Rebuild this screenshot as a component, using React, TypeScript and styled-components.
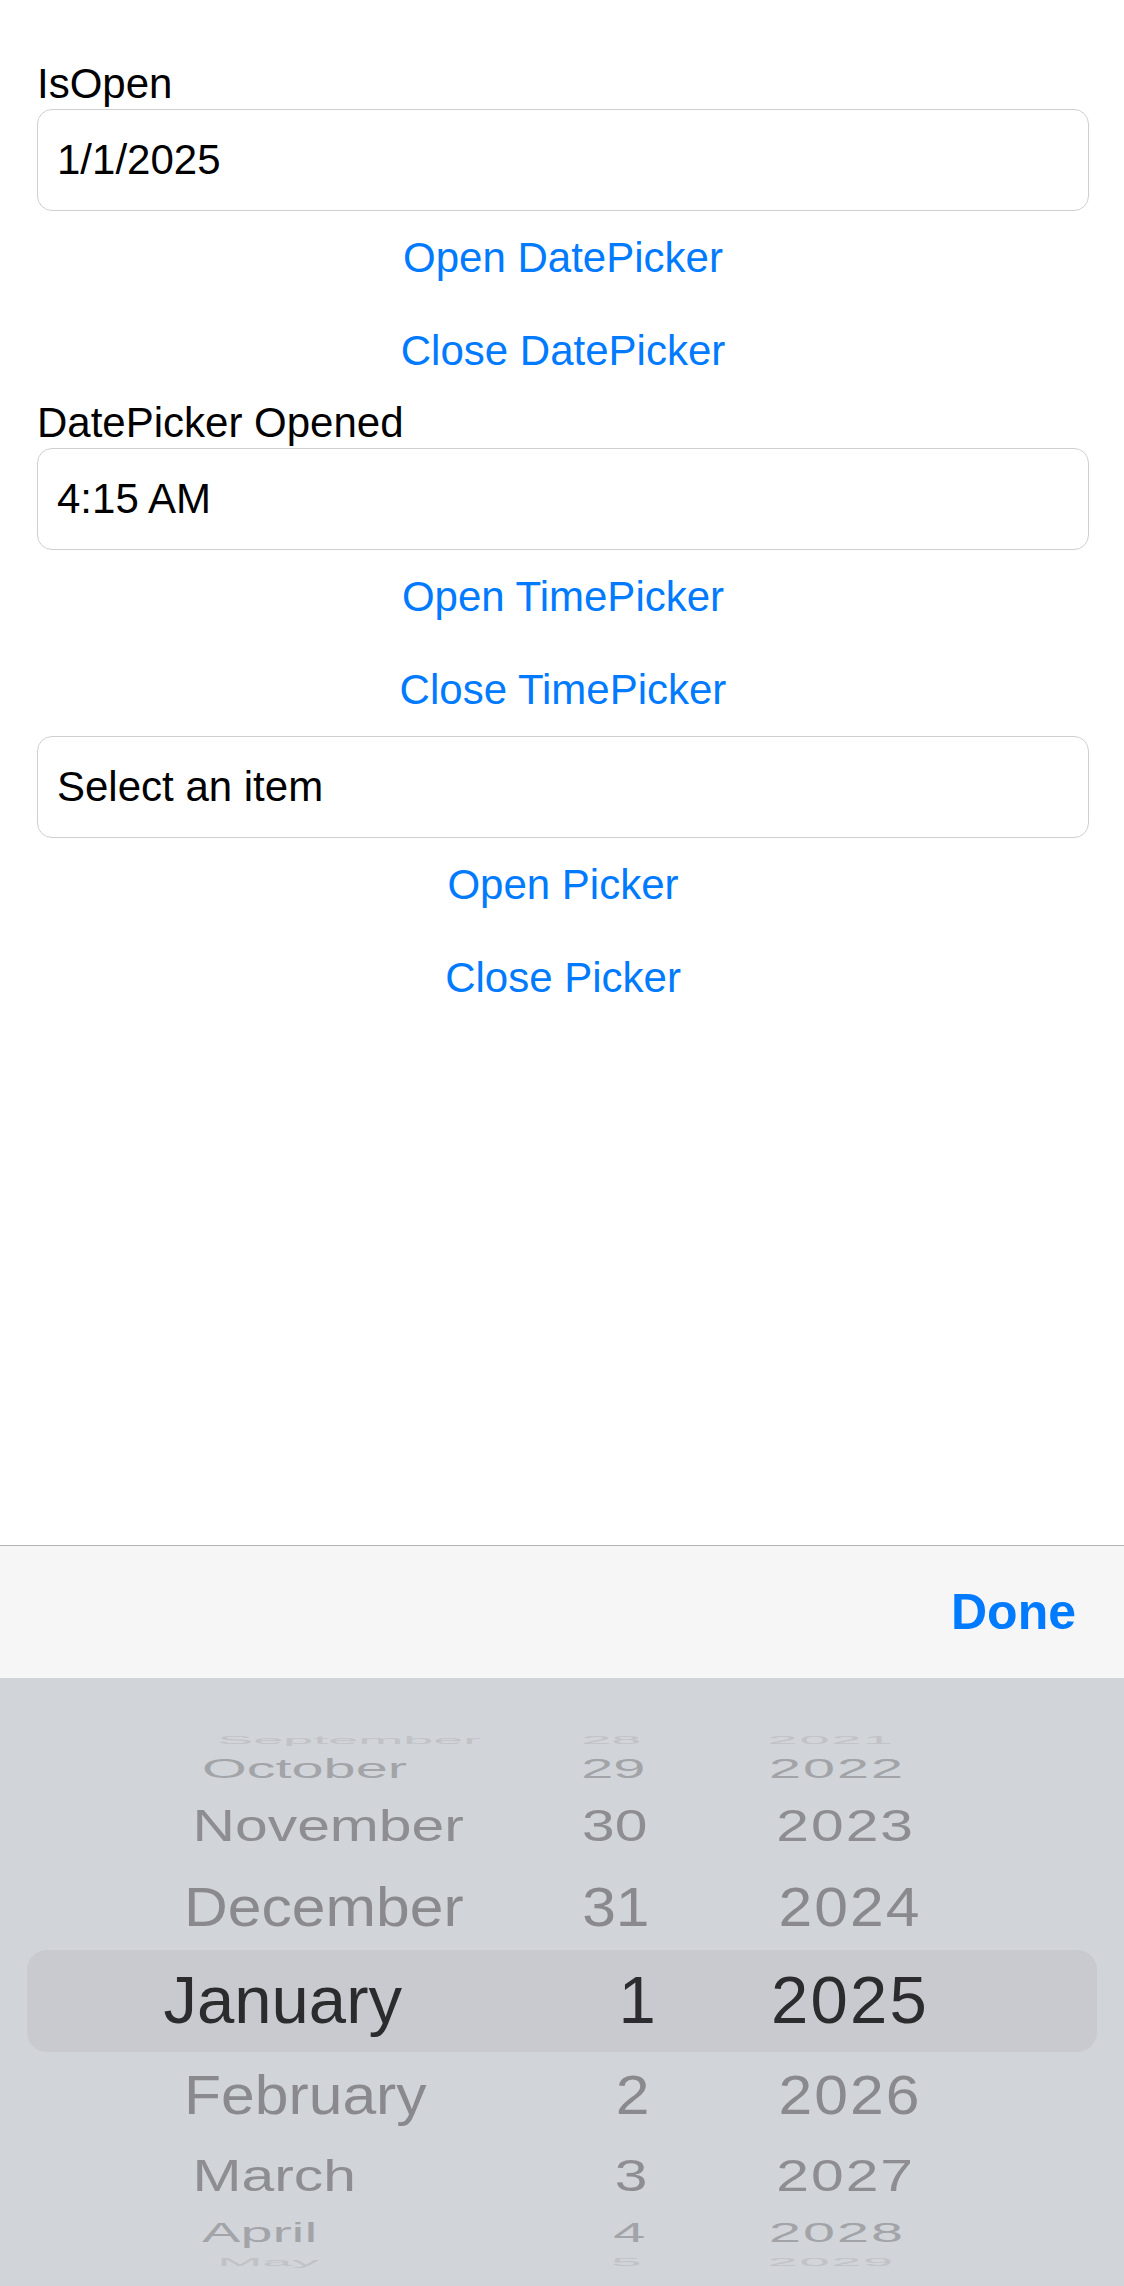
import styled, { createGlobalStyle } from "styled-components";

const GlobalStyle = createGlobalStyle`
  * {
    box-sizing: border-box;
  }

  body {
    margin: 0;
    background: #ffffff;
    font-family: "Liberation Sans", Arial, sans-serif;
    color: #000000;
  }
`;

const Page = styled.div`
  display: flex;
  flex-direction: column;
  min-height: 100vh;
`;

const Content = styled.main`
  flex: 1;
  display: flex;
  flex-direction: column;
  padding: 58px 35px 0 37px;
`;

const Label = styled.div`
  font-size: 42px;
  line-height: 51px;
  height: 51px;
`;

const Field = styled.div`
  display: flex;
  align-items: center;
  height: 102px;
  padding: 0 19px;
  border: 1px solid #cfcfcf;
  border-radius: 15px;
  font-size: 42px;
`;

const LinkButton = styled.button`
  height: 93px;
  border: 0;
  padding: 0;
  background: none;
  font-family: inherit;
  font-size: 42px;
  color: #007aff;
  cursor: pointer;
`;

const Sheet = styled.div`
  border-top: 1px solid #b2b2b2;
`;

const Toolbar = styled.div`
  display: flex;
  align-items: center;
  justify-content: flex-end;
  height: 132px;
  padding-right: 48px;
  background: #f6f6f6;
`;

const DoneButton = styled.button`
  border: 0;
  padding: 0;
  background: none;
  font-family: inherit;
  font-size: 50px;
  font-weight: 700;
  color: #007aff;
  cursor: pointer;
`;

const Picker = styled.div`
  display: grid;
  height: 608px;
  padding-top: 38px;
  background: #d1d4d9;
  overflow: hidden;
`;

const Band = styled.div`
  grid-area: 1 / 1;
  align-self: center;
  height: 102px;
  margin: 0 27px;
  border-radius: 20px;
  background: #c9cacf;
`;

const Wheels = styled.div`
  grid-area: 1 / 1;
  display: flex;
  padding-left: 186px;
`;

const Wheel = styled.div<{ $width: number; $gap?: number }>`
  display: grid;
  width: ${(p) => p.$width}px;
  margin-left: ${(p) => p.$gap ?? 0}px;
`;

// projected rows of the wheel: offset from the centre row, squash, and pull toward the middle
const rowOffset = [0, 94, 175, 232, 261];
const rowScaleX = [1.117, 1.01, 0.98, 0.96, 0.9];
const rowScaleY = [1.117, 0.93, 0.745, 0.45, 0.19];
const rowPull = [0, 0, 0.015, 0.045, 0.065];
const rowColors = ["#2c2c2e", "#8a8a8e", "#8e8e92", "#a2a4a8", "#c0c2c6"];

const Row = styled.div<{ $k: number; $align: string; $origin: number; $pull: number; $digits?: boolean }>`
  grid-area: 1 / 1;
  align-self: center;
  font-size: 60px;
  line-height: 1;
  white-space: nowrap;
  text-align: ${(p) => p.$align};
  letter-spacing: ${(p) => (p.$digits ? "2px" : "0")};
  color: ${(p) => rowColors[Math.abs(p.$k)]};
  transform-origin: ${(p) => p.$origin}px 50%;
  transform: ${(p) => {
    const n = Math.abs(p.$k);
    const y = Math.sign(p.$k) * rowOffset[n];
    const x = p.$pull * rowPull[n];
    return `translate(${x}px, ${y}px) scale(${rowScaleX[n]}, ${rowScaleY[n]})`;
  }};
`;

const months = ["September", "October", "November", "December", "January", "February", "March", "April", "May"];
const days = ["28", "29", "30", "31", "1", "2", "3", "4", "5"];
const years = ["2021", "2022", "2023", "2024", "2025", "2026", "2027", "2028", "2029"];

type WheelProps = {
  items: string[];
  width: number;
  origin: number;
  pull: number;
  align: string;
  gap?: number;
  digits?: boolean;
};

function WheelColumn({ items, width, origin, pull, align, gap, digits }: WheelProps) {
  return (
    <Wheel $width={width} $gap={gap}>
      {items.map((item, i) => (
        <Row key={item} $k={i - 4} $align={align} $origin={origin} $pull={pull} $digits={digits}>
          {item}
        </Row>
      ))}
    </Wheel>
  );
}

export default function App() {
  return (
    <>
      <GlobalStyle />
      <Page>
        <Content>
          <Label>IsOpen</Label>
          <Field>1/1/2025</Field>
          <LinkButton>Open DatePicker</LinkButton>
          <LinkButton>Close DatePicker</LinkButton>
          <Label>DatePicker Opened</Label>
          <Field>4:15 AM</Field>
          <LinkButton>Open TimePicker</LinkButton>
          <LinkButton>Close TimePicker</LinkButton>
          <Field>Select an item</Field>
          <LinkButton>Open Picker</LinkButton>
          <LinkButton>Close Picker</LinkButton>
        </Content>
        <Sheet>
          <Toolbar>
            <DoneButton>Done</DoneButton>
          </Toolbar>
          <Picker>
            <Band />
            <Wheels>
              <WheelColumn items={months} width={334} origin={192} pull={184} align="left" />
              <WheelColumn items={days} width={129} origin={71} pull={-29} align="right" />
              <WheelColumn items={years} width={260} origin={130} pull={-288} align="center" gap={71} digits />
            </Wheels>
          </Picker>
        </Sheet>
      </Page>
    </>
  );
}
